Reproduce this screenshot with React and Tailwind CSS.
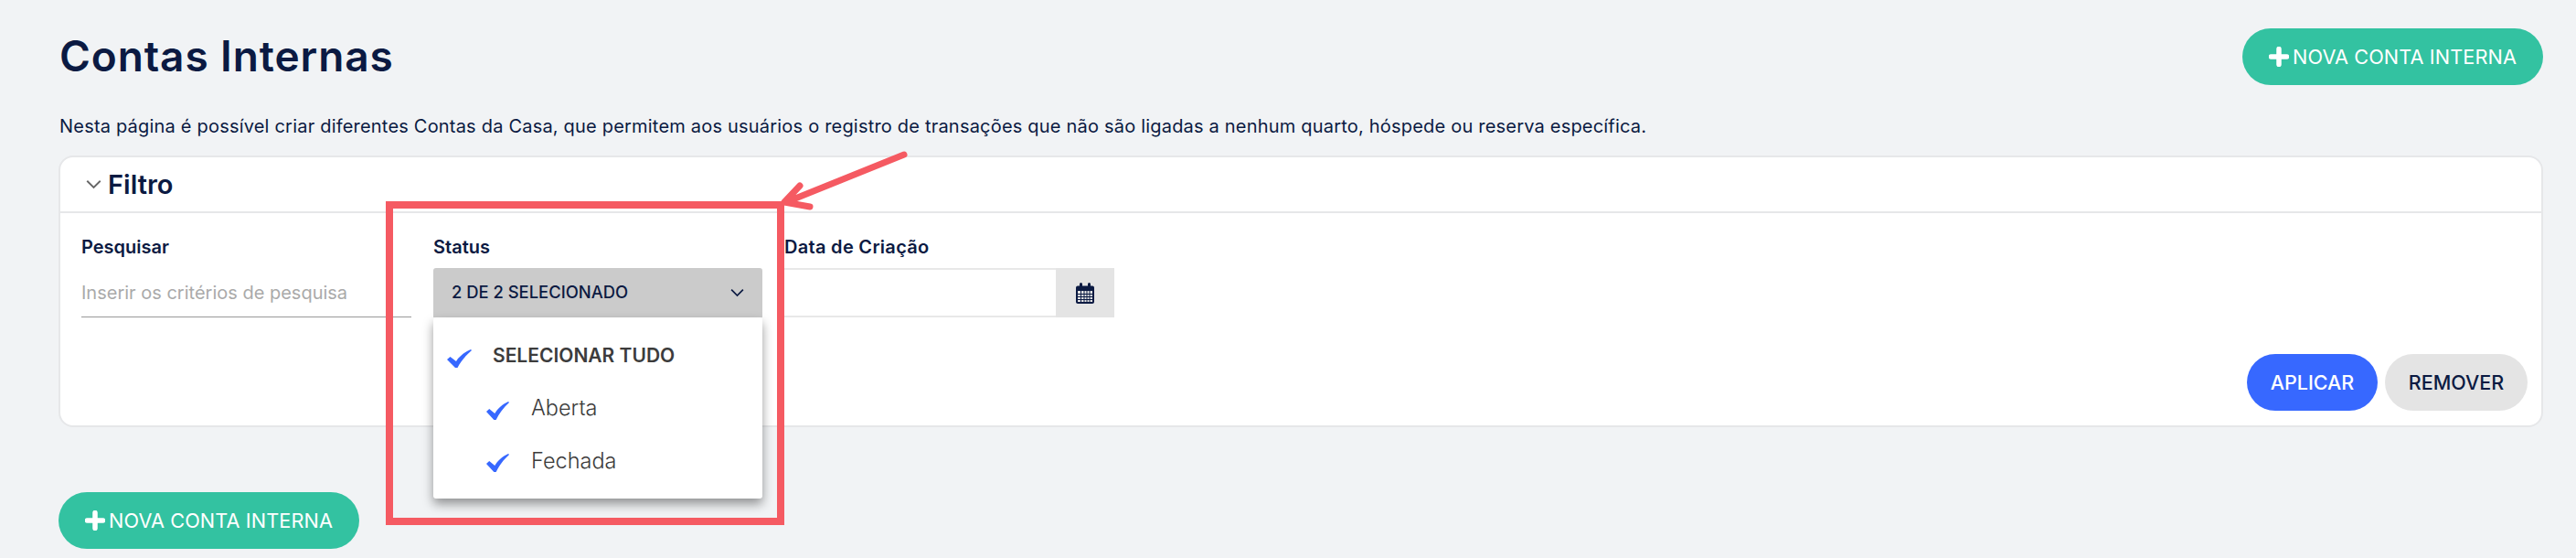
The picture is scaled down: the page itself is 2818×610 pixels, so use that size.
import React from 'react';

const font = { fontFamily: 'Inter, "Liberation Sans", sans-serif' };

const PlusIcon = () => (
    <svg width="22" height="22" viewBox="0 0 22 22" className="shrink-0">
        <path d="M11 2.5v17M2.5 11h17" stroke="#fff" strokeWidth="5.5" strokeLinecap="round" />
    </svg>
);

const CheckIcon = ({ className }) => (
    <svg viewBox="0 0 27 20" className={className} preserveAspectRatio="none">
        <path d="M0 11 L3.5 8 L10 13 C13 8 19 3 26 0 L27 1 C20 7 15 13 11.5 20 L9 20 Z" fill="#3768ff" />
    </svg>
);

const Chevron = ({ className, color }) => (
    <svg viewBox="0 0 16 10" className={className} fill="none">
        <path d="M1.2 1.5 8 8.3l6.8-6.8" stroke={color} strokeWidth="1.8" />
    </svg>
);

const CalendarIcon = () => (
    <svg width="22" height="23" viewBox="0 0 22 23" fill="#0b1a42">
        <path d="M1 5.5C1 4.2 2 3.5 3 3.5h2V1.5a1.5 1.5 0 0 1 3 0v2h6v-2a1.5 1.5 0 0 1 3 0v2h2c1 0 2 .7 2 2V21c0 1-1 2-2 2H3c-1 0-2-1-2-2Z" />
        <path d="M3 9h16v12H3Z" fill="#e4e4e4" />
        <path d="M3 12.5h16M3 15.5h16M3 18.5h16M6.5 9v12M10 9v12M13 9v12M16 9v12" stroke="#0b1a42" strokeWidth="1" fill="none" />
    </svg>
);

const NewButton = () => (
    <button className="flex h-[62px] w-[329px] items-center justify-center gap-[4px] rounded-[31px] bg-[#33c2a1] text-[21.7px] tracking-[0.1px] text-white">
        <PlusIcon />
        NOVA CONTA INTERNA
    </button>
);

const App = () => {
    return (
        <div style={font} className="relative h-[610px] w-full overflow-hidden bg-[#f1f3f5] pr-[36px] pl-[64px] text-[#0b1a42]">
            <div className="flex items-start justify-between pt-[31px]">
                <h1 className="mt-[2px] ml-[1px] text-[46px] leading-[56px] font-semibold tracking-[0.9px]">Contas Internas</h1>
                <NewButton />
            </div>

            <p className="mt-[30px] ml-[1px] text-[20px] leading-[30px] tracking-[0.2px]">
                Nesta página é possível criar diferentes Contas da Casa, que permitem aos usuários o registro de transações que não são ligadas a nenhum quarto, hóspede ou reserva específica.
            </p>

            <div className="mt-[17px] rounded-[16px] border-2 border-[#e6e7e9] bg-white">
                <div className="flex h-[61px] items-center gap-[7px] border-b-2 border-[#e6e7e9] pl-[28px]">
                    <Chevron className="h-[11px] w-[17px]" color="#666" />
                    <span className="text-[29px] font-semibold">Filtro</span>
                </div>

                <div className="pt-[25px] pr-[15px] pb-[16px] pl-[23px]">
                    <div className="grid grid-cols-[361px_360px_361px] gap-x-[24px]">
                        <div>
                            <label className="block h-[24px] text-[20px] leading-[24px] font-semibold">Pesquisar</label>
                            <div className="mt-[11px] flex h-[54px] items-center border-b border-[#999] text-[20px] text-[#aaa]">
                                Inserir os critérios de pesquisa
                            </div>
                        </div>

                        <div className="relative">
                            <label className="block h-[24px] text-[20px] leading-[24px] font-semibold">Status</label>
                            <div className="mt-[11px] flex h-[54px] items-center justify-between rounded-t-[3px] bg-[#cbcbcb] pr-[20px] pl-[20px] text-[18.4px] font-medium">
                                2 DE 2 SELECIONADO
                                <Chevron className="h-[10px] w-[15px]" color="#0b1a42" />
                            </div>
                            <div className="absolute top-[89px] left-0 z-10 h-[198px] w-[360px] rounded-[3px] bg-white pt-[27px] text-[23.5px] text-[#3c3c3c] shadow-[0_6px_12px_rgba(0,0,0,0.4)]">
                                <div className="flex h-[58px] items-start pt-[1px] pl-[15px]">
                                    <CheckIcon className="mt-[7px] h-[20px] w-[27px]" />
                                    <span className="ml-[23px] text-[21px] leading-[28px] font-semibold">SELECIONAR TUDO</span>
                                </div>
                                <div className="flex h-[58px] items-start pl-[58px]">
                                    <CheckIcon className="mt-[7px] h-[20px] w-[25px]" />
                                    <span className="ml-[24px] leading-[28px] font-light">Aberta</span>
                                </div>
                                <div className="flex h-[58px] items-start pl-[58px]">
                                    <CheckIcon className="mt-[6px] h-[20px] w-[25px]" />
                                    <span className="ml-[24px] leading-[28px] font-light">Fechada</span>
                                </div>
                            </div>
                        </div>

                        <div>
                            <label className="block h-[24px] text-[20px] leading-[24px] font-semibold tracking-[0.3px]">Data de Criação</label>
                            <div className="mt-[11px] flex h-[54px]">
                                <div className="flex-1 border-y-2 border-[#e8e8e8]" />
                                <div className="flex w-[64px] items-center justify-center bg-[#e4e4e4]">
                                    <CalendarIcon />
                                </div>
                            </div>
                        </div>
                    </div>

                    <div className="mt-[40px] flex justify-end gap-[8px]">
                        <button className="h-[62px] w-[143px] rounded-[31px] bg-[#3768ff] text-[21.5px] font-medium text-white">APLICAR</button>
                        <button className="h-[62px] w-[156px] rounded-[31px] bg-[#e4e4e4] text-[21.5px] font-medium">REMOVER</button>
                    </div>
                </div>
            </div>

            <div className="mt-[71px]">
                <NewButton />
            </div>

            {/* annotation drawn over the page */}
            <div className="pointer-events-none absolute top-[220px] left-[422px] z-20 h-[354px] w-[436px] border-8 border-[#f55a62]" />
            <svg className="pointer-events-none absolute top-[150px] left-[840px] z-20" width="170" height="90" fill="none">
                <path d="M149 19 L20 71 M35 53 L18 71 L46 76" stroke="#f55a62" strokeWidth="7" strokeLinecap="round" strokeLinejoin="round" />
            </svg>
        </div>
    );
};

export default App;
